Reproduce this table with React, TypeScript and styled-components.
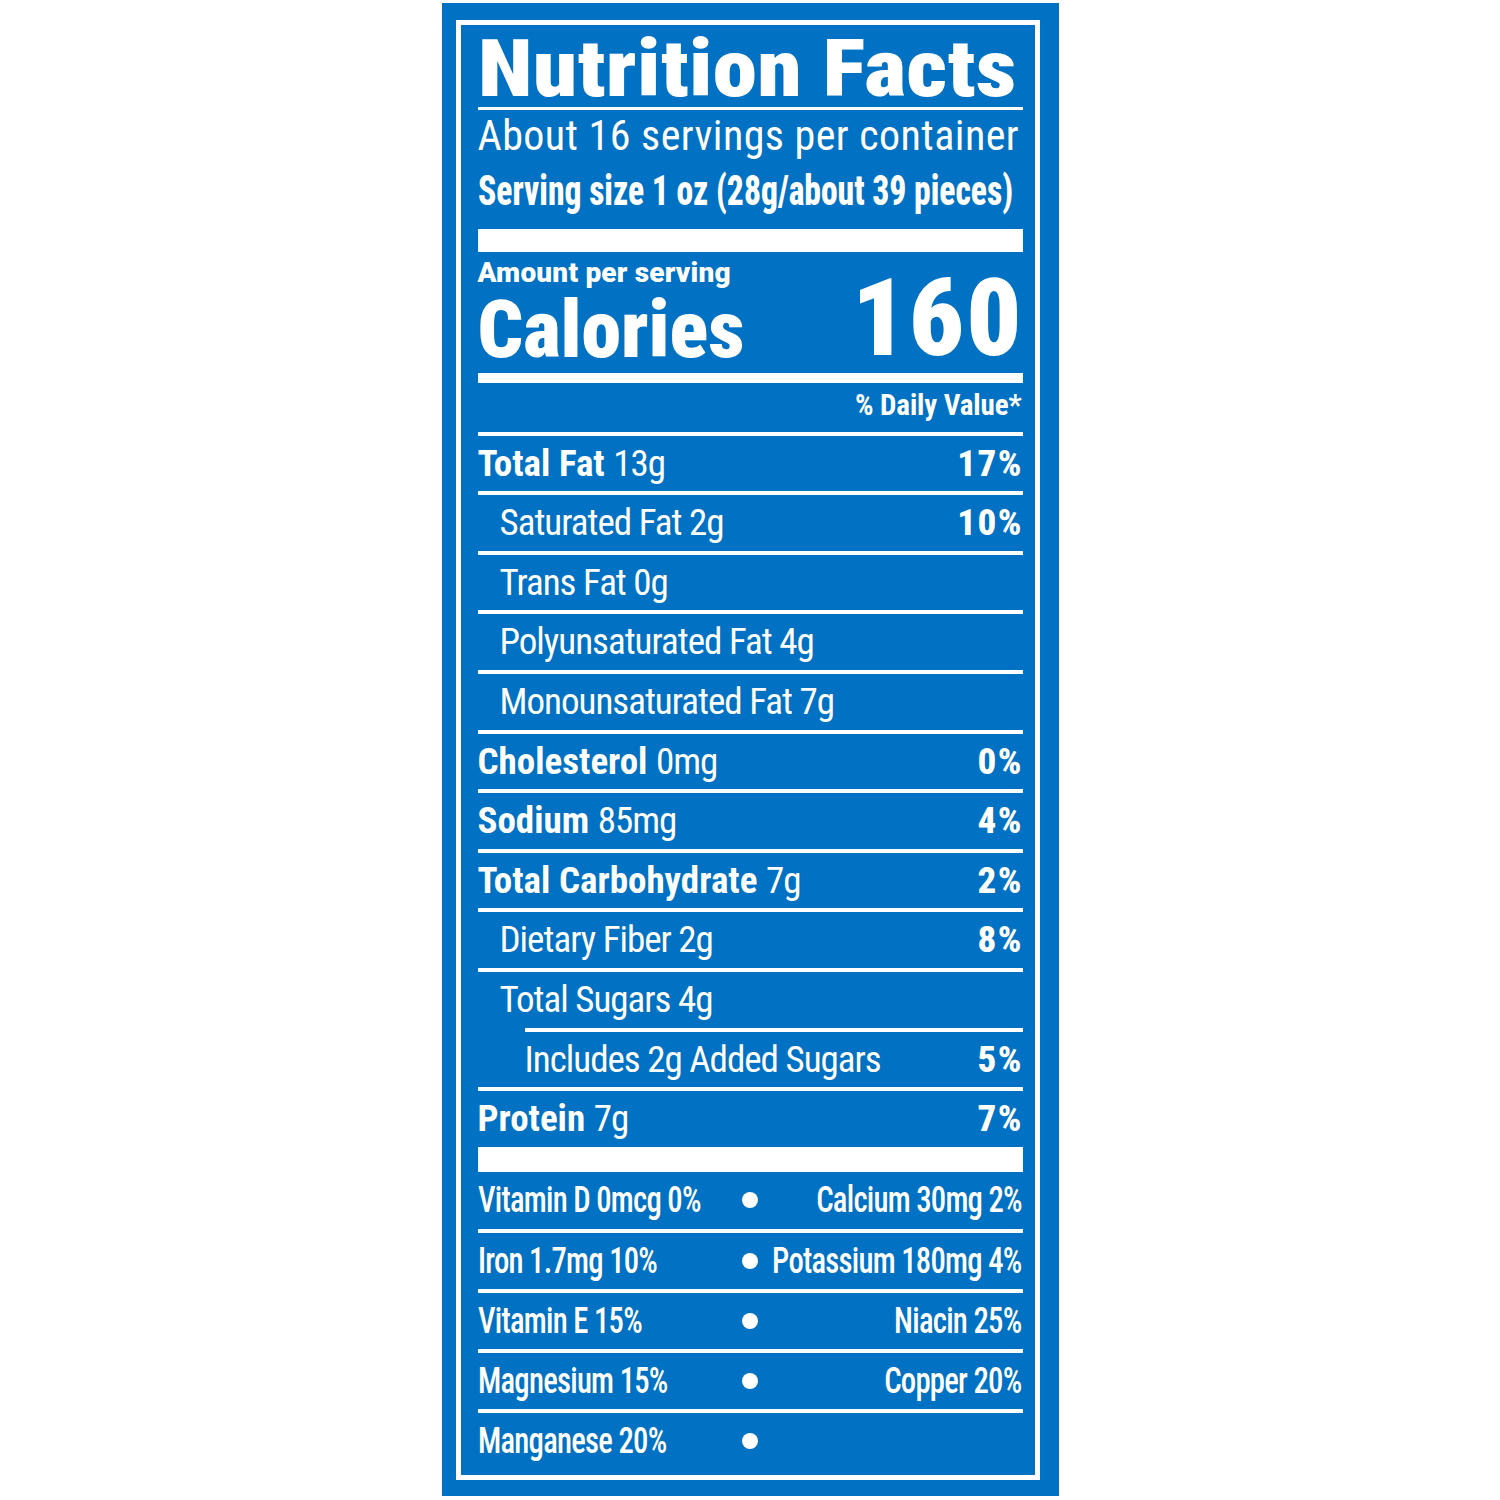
import React from "react";
import styled, { createGlobalStyle } from "styled-components";

const BLUE = "#0071c3";

const GlobalStyle = createGlobalStyle`
  html, body { margin: 0; padding: 0; background: #ffffff; }
  * { box-sizing: border-box; }
`;

const Page = styled.div`
  display: flex;
  justify-content: center;
  padding-top: 3px;
  font-family: Roboto, "Roboto Condensed", "Liberation Sans", sans-serif;
  color: #ffffff;
`;

const Label = styled.section`
  width: 617px;
  background: ${BLUE};
  padding: 17px 19px 16px 14px;
`;

const Frame = styled.div`
  border: 5px solid #ffffff;
  padding: 7px 12px 6px 17px;
`;

const Title = styled.h1`
  margin: 0;
  font-size: 80px;
  line-height: 75px;
  font-weight: 900;
  font-stretch: 75%;
  letter-spacing: 0.3px;
  white-space: nowrap;
  transform: scaleX(1.118);
  transform-origin: left center;
`;

const Rule = styled.div<{ $h: number; $indent?: number }>`
  height: ${(p) => p.$h}px;
  margin-left: ${(p) => p.$indent || 0}px;
  background: #ffffff;
`;

const Servings = styled.div`
  font-size: 42px;
  line-height: 51px;
  font-weight: 400;
  font-stretch: 75%;
  letter-spacing: 0.45px;
  white-space: nowrap;
`;

const ServingSize = styled.div`
  font-size: 43px;
  line-height: 58px;
  font-weight: 800;
  font-stretch: 75%;
  white-space: nowrap;
  margin-bottom: 10px;
  transform: scaleX(0.78);
  transform-origin: left center;
`;

const CaloriesBlock = styled.div`
  display: flex;
  justify-content: space-between;
  align-items: flex-end;
  padding-bottom: 7px;
`;

const CaloriesLeft = styled.div`
  display: flex;
  flex-direction: column;
`;

const Amount = styled.div`
  font-size: 28px;
  line-height: 41.6px;
  font-weight: 900;
  font-stretch: 100%;
  letter-spacing: 0.2px;
  white-space: nowrap;
`;

const CaloriesLabel = styled.div`
  font-size: 80px;
  line-height: 72px;
  font-weight: 900;
  font-stretch: 75%;
`;

const CaloriesValue = styled.div`
  font-size: 108px;
  line-height: 96px;
  font-weight: 900;
  font-stretch: 75%;
  letter-spacing: 2px;
  margin-right: -1px;
`;

const DVHeader = styled.div`
  text-align: right;
  font-size: 29px;
  line-height: 44px;
  font-weight: 700;
  font-stretch: 75%;
  letter-spacing: -0.1px;
  padding-bottom: 5px;
  padding-right: 1px;
`;

const NutrientRow = styled.div<{ $indent: number; $ruleIndent: number }>`
  display: flex;
  justify-content: space-between;
  align-items: center;
  height: 59.6px;
  border-top: 4px solid #ffffff;
  margin-left: ${(p) => p.$ruleIndent}px;
  padding-left: ${(p) => p.$indent}px;
  font-size: 37px;
  line-height: 55.6px;
  font-weight: 400;
  font-stretch: 75%;
  white-space: nowrap;
`;

const Regular = styled.span`
  letter-spacing: -1px;
`;

const Bold = styled.span`
  font-weight: 700;
`;

const Percent = styled.span`
  font-weight: 800;
  letter-spacing: 1.5px;
  margin-right: -0.5px;
`;

const VitaminRow = styled.div<{ $first: boolean }>`
  display: grid;
  grid-template-columns: minmax(0, 1fr) 30px minmax(0, 1fr);
  align-items: center;
  height: ${(p) => (p.$first ? 57 : 60)}px;
  border-top: ${(p) => (p.$first ? 0 : 4)}px solid #ffffff;
  font-size: 37px;
  line-height: 56px;
  font-weight: 500;
  font-stretch: 75%;
  letter-spacing: -0.9px;
  white-space: nowrap;
`;

const VitCell = styled.div<{ $side: "left" | "right" }>`
  display: flex;
  min-width: 0;
  justify-content: ${(p) => (p.$side === "left" ? "flex-start" : "flex-end")};
  padding-right: ${(p) => (p.$side === "right" ? 1 : 0)}px;
`;

const VitText = styled.span<{ $side: "left" | "right" }>`
  display: inline-block;
  flex: none;
  transform: scaleX(0.83);
  transform-origin: ${(p) => p.$side} center;
`;

const Dot = styled.span`
  justify-self: center;
  width: 16px;
  height: 16px;
  border-radius: 50%;
  background: #ffffff;
`;

type Nutrient = {
  bold?: string;
  text: string;
  dv?: string;
  level?: 0 | 1 | 2;
};

const nutrients: Nutrient[] = [
  { bold: "Total Fat", text: "13g", dv: "17%" },
  { text: "Saturated Fat 2g", dv: "10%", level: 1 },
  { text: "Trans Fat 0g", level: 1 },
  { text: "Polyunsaturated Fat 4g", level: 1 },
  { text: "Monounsaturated Fat 7g", level: 1 },
  { bold: "Cholesterol", text: "0mg", dv: "0%" },
  { bold: "Sodium", text: "85mg", dv: "4%" },
  { bold: "Total Carbohydrate", text: "7g", dv: "2%" },
  { text: "Dietary Fiber 2g", dv: "8%", level: 1 },
  { text: "Total Sugars 4g", level: 1 },
  { text: "Includes 2g Added Sugars", dv: "5%", level: 2 },
  { bold: "Protein", text: "7g", dv: "7%" },
];

const vitamins: [string, string][] = [
  ["Vitamin D 0mcg 0%", "Calcium 30mg 2%"],
  ["Iron 1.7mg 10%", "Potassium 180mg 4%"],
  ["Vitamin E 15%", "Niacin 25%"],
  ["Magnesium 15%", "Copper 20%"],
  ["Manganese 20%", ""],
];

export default function App() {
  return (
    <>
      <GlobalStyle />
      <Page>
        <Label>
          <Frame>
            <Title>Nutrition Facts</Title>
            <Rule $h={3} />
            <Servings>About 16 servings per container</Servings>
            <ServingSize>Serving size 1 oz (28g/about 39 pieces)</ServingSize>
            <Rule $h={23} />
            <CaloriesBlock>
              <CaloriesLeft>
                <Amount>Amount per serving</Amount>
                <CaloriesLabel>Calories</CaloriesLabel>
              </CaloriesLeft>
              <CaloriesValue>160</CaloriesValue>
            </CaloriesBlock>
            <Rule $h={10} />
            <DVHeader>% Daily Value*</DVHeader>
            {nutrients.map((n) => {
              const level = n.level || 0;
              return (
                <NutrientRow
                  key={(n.bold || "") + n.text}
                  $indent={level === 1 ? 22 : 0}
                  $ruleIndent={level === 2 ? 47 : 0}
                >
                  <span>
                    {n.bold && <Bold>{n.bold} </Bold>}
                    <Regular>{n.text}</Regular>
                  </span>
                  {n.dv && <Percent>{n.dv}</Percent>}
                </NutrientRow>
              );
            })}
            <Rule $h={25} />
            {vitamins.map(([l, r], i) => (
              <VitaminRow key={l} $first={i === 0}>
                <VitCell $side="left">
                  <VitText $side="left">{l}</VitText>
                </VitCell>
                <Dot />
                <VitCell $side="right">
                  {r && <VitText $side="right">{r}</VitText>}
                </VitCell>
              </VitaminRow>
            ))}
          </Frame>
        </Label>
      </Page>
    </>
  );
}
